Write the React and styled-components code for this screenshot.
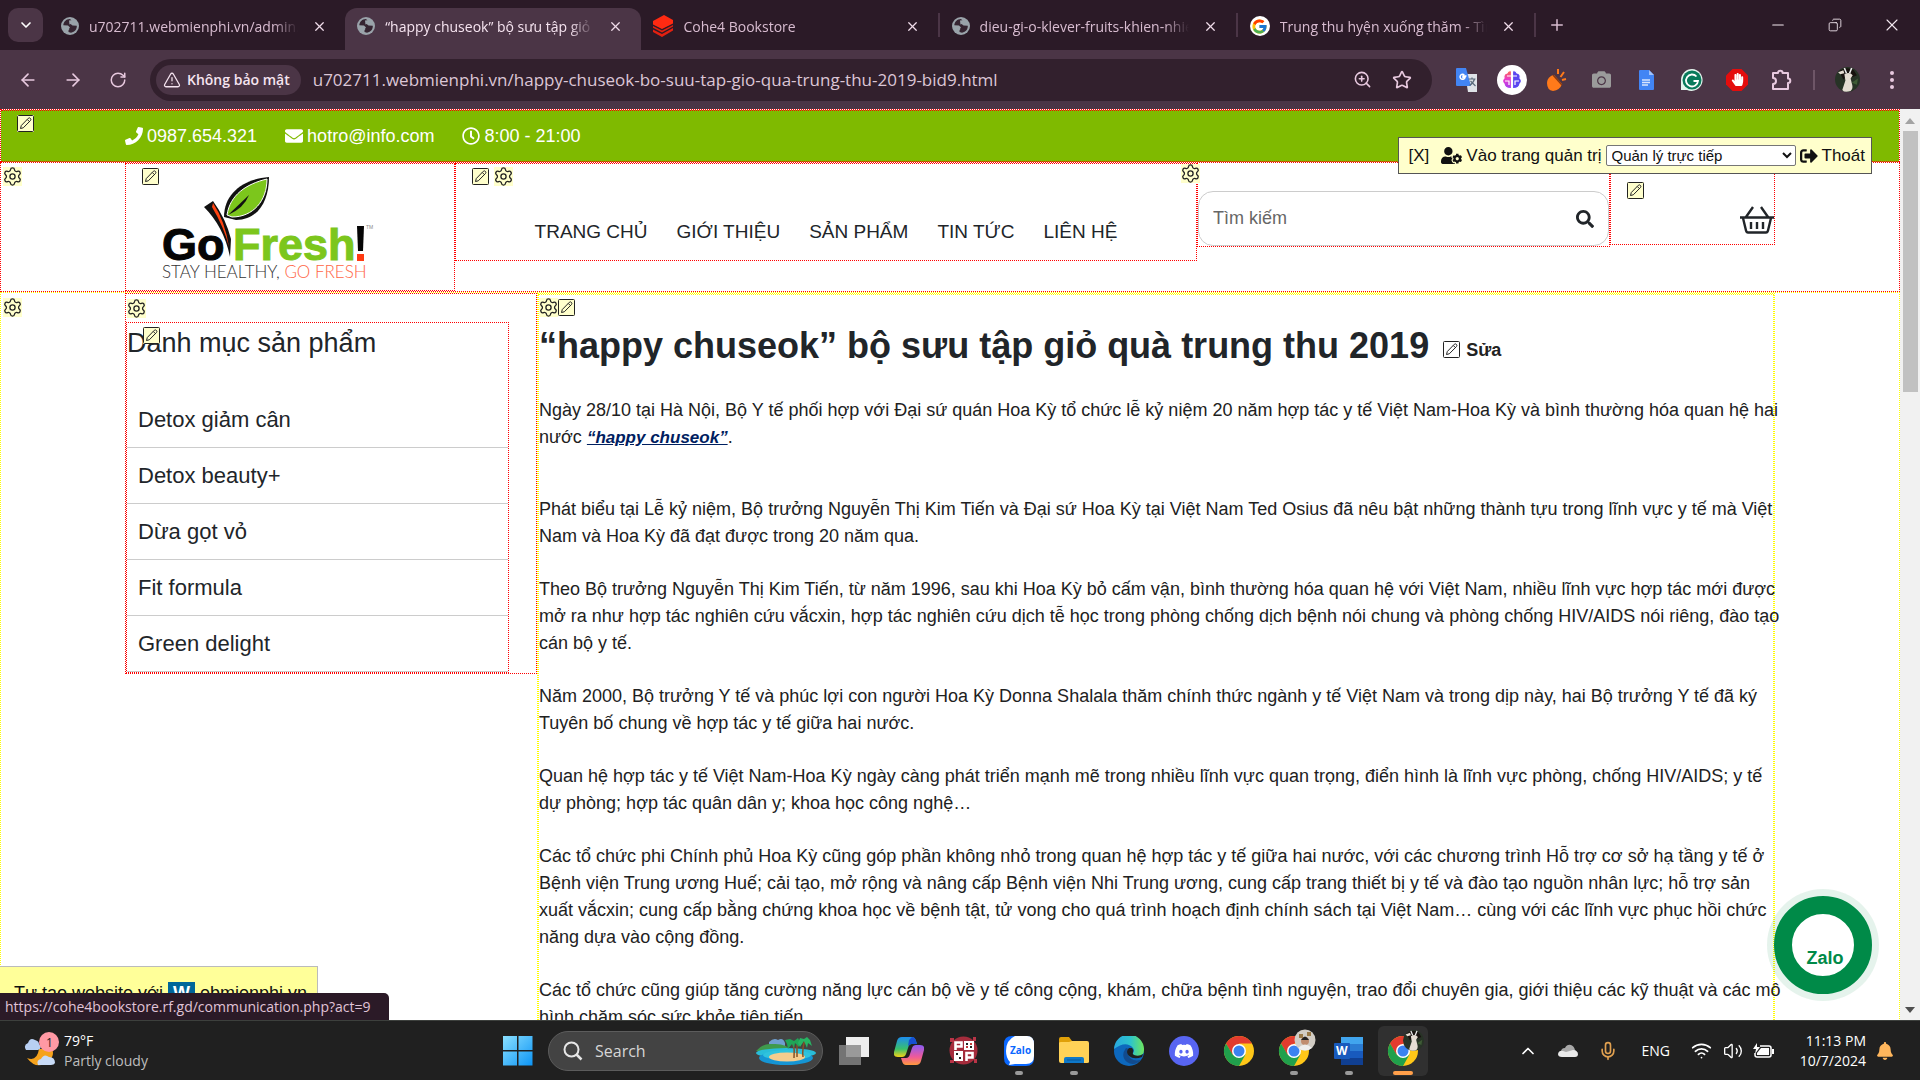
import React from "react";
import styled, { createGlobalStyle } from "styled-components";
import { Settings, Star, ZoomIn, RotateCw, ArrowLeft, ArrowRight, X, Plus, ChevronDown, ChevronUp, Wifi, Volume2, Mic, Minus, Copy, TriangleAlert } from "lucide-react";
import { FaPhone, FaEnvelope, FaRegClock, FaUserCog, FaSignOutAlt, FaSearch, FaDiscord, FaCamera, FaHandPaper, FaBell } from "react-icons/fa";
import { FcGoogle } from "react-icons/fc";

const ui = `"Open Sans", "Noto Sans", sans-serif`;
const arial = `"Liberation Sans", Arial, sans-serif`;

const GlobalStyle = createGlobalStyle`
  * { box-sizing: border-box; }
  body { margin: 0; font-family: ${arial}; color: #212529; }
  button, input, select { font: inherit; color: inherit; }
  button { border: 0; padding: 0; background: none; display: inline-flex; align-items: center; justify-content: center; }
  a { color: inherit; text-decoration: none; }
  h1, h2, p, ul { margin: 0; padding: 0; }
  ul { list-style: none; }
  svg { display: block; flex: none; }
`;

const Screen = styled.div`
  height: 100vh;
  display: flex;
  flex-direction: column;
  overflow: hidden;
  background: #fff;
`;

/* Browser chrome */
const TabStrip = styled.div`
  height: 50px;
  flex: none;
  display: flex;
  align-items: stretch;
  padding: 8px 0 0 8px;
  background: #2b1a27;
  color: #d8bcd0;
  font: 14px ${ui};
`;
const TabSearch = styled.button`
  width: 35px;
  height: 34px;
  border-radius: 10px;
  background: #4b3546;
  color: #fff;
`;
const Tabs = styled.div`
  display: flex;
  flex: 0 1 1487px;
  margin-left: 6px;
`;
const Tab = styled.div`
  flex: 1;
  min-width: 0;
  display: flex;
  align-items: center;
  gap: 10px;
  padding: 0 18px 6px 12px;
  color: ${(p) => (p.$active ? "#f6e4f0" : "inherit")};
  background: ${(p) => (p.$active ? "#4b3546" : "none")};
  border-radius: 12px 12px 0 0;
`;
const TabTitle = styled.span`
  flex: 1;
  overflow: hidden;
  white-space: nowrap;
  mask-image: linear-gradient(90deg, #000 88%, transparent);
`;
const TabClose = styled.button`
  margin-left: 4px;
  color: #f0dcea;
`;
const TabDivider = styled.span`
  width: 2px;
  height: 24px;
  margin-top: 5px;
  background: #4b3546;
`;
const ToolDivider = styled.span`
  width: 2px;
  height: 20px;
  margin: 0 9px;
  background: #6e5667;
`;
const NewTab = styled.button`
  width: 42px;
  height: 34px;
`;
const WindowButtons = styled.div`
  margin-left: auto;
  display: flex;
  height: 34px;
  color: #f3e8f0;
`;
const WindowButton = styled.button`
  width: 57px;
`;
const Toolbar = styled.div`
  height: 59px;
  flex: none;
  display: flex;
  align-items: center;
  padding: 0 6px 0 5px;
  background: #4b3546;
  color: #e8c9df;
  font: 16px ${ui};
`;
const ToolButton = styled.button`
  width: ${(p) => p.$w || 45}px;
  height: 40px;
`;
const Address = styled.div`
  flex: 1;
  min-width: 0;
  height: 42px;
  margin: 0 12px 0 10px;
  padding: 0 10px 0 6px;
  display: flex;
  align-items: center;
  border-radius: 21px;
  background: #32202d;
`;
const Security = styled.button`
  height: 30px;
  padding: 0 11px 0 7px;
  gap: 6px;
  border-radius: 15px;
  background: #4b3546;
  color: #f6e4f0;
  font: 600 14px ${ui};
`;
const Url = styled.input`
  flex: 1;
  min-width: 0;
  border: 0;
  outline: 0;
  background: none;
  color: #dcc6d6;
  font: 17px ${ui};
  padding: 0 0 0 12px;
`;
const BrainCircle = styled.span`
  width: 30px;
  height: 30px;
  border-radius: 50%;
  background: #fff;
  display: grid;
  place-items: center;
`;

/* Web page */
const Viewport = styled.div`
  flex: 1;
  min-height: 0;
  position: relative;
  display: flex;
  overflow: hidden;
`;
const Page = styled.div`
  flex: 1;
  min-width: 0;
`;
const Scrollbar = styled.div`
  width: 20px;
  display: flex;
  flex-direction: column;
  align-items: center;
  justify-content: space-between;
  background: #f1f1f1;
  padding: 9px 0 7px;
`;
const Thumb = styled.div`
  width: 15px;
  height: 261px;
  margin: 7px 0 auto;
  background: #c1c1c1;
`;
const TopBar = styled.div`
  position: relative;
  height: 53px;
  border: 1px dotted red;
  border-bottom: 0;
  background: #7fba00;
  background-clip: padding-box;
  color: #fff;
`;
const TopBarInner = styled.div`
  height: 52px;
  display: flex;
  align-items: center;
  gap: 28px;
  padding: 0 124px;
  border-top: 1px dotted red;
  border-bottom: 1px dotted red;
  font-size: 18px;
`;
const Contact = styled.a`
  display: flex;
  align-items: center;
  gap: 4px;
`;
const Header = styled.header`
  position: relative;
  border: 1px dotted red;
  height: 130px;
  display: grid;
  grid-template-columns: minmax(0, 330fr) minmax(0, 742fr) minmax(0, 413fr) minmax(0, 165fr);
  padding: 0 124px;
  align-items: start;
`;
const Cell = styled.div`
  position: relative;
  border: 1px dotted red;
  height: ${(p) => p.$h}px;
`;
const LogoCell = styled(Cell)`
  padding: 9px 0 0 36px;
`;
const Nav = styled.nav`
  position: relative;
  height: 98px;
  border: 1px dotted red;
  display: flex;
  justify-content: center;
  gap: 29px;
  padding: 56px 0 0;
  font-size: 19px;
  line-height: 24px;
  white-space: nowrap;
`;
const SearchCell = styled(Cell)`
  border-top: 0;
  padding-top: 28px;
`;
const SearchBox = styled.form`
  height: 55px;
  display: flex;
  align-items: center;
  padding: 0 14px;
  border: 1px solid #ccc;
  border-radius: 15px;
`;
const SearchInput = styled.input`
  flex: 1;
  min-width: 0;
  border: 0;
  outline: 0;
  padding: 0;
  font-size: 18px;
  &::placeholder { color: #666; opacity: 1; }
`;
const CartCell = styled(Cell)`
  display: flex;
  justify-content: flex-end;
  align-items: flex-end;
  padding: 0 0 10px;
`;
const Main = styled.main`
  position: relative;
  border: 1px dotted #ff0;
  display: grid;
  grid-template-columns: minmax(0, 412fr) minmax(0, 1238fr);
  align-items: start;
  padding: 0 124px;
`;
const Sidebar = styled.aside`
  position: relative;
  border: 1px dotted red;
  padding: 28px 27px 0 0;
`;
const Menu = styled.div`
  position: relative;
  border: 1px dotted red;
`;
const MenuTitle = styled.h2`
  font-size: 27px;
  font-weight: 400;
  line-height: 41px;
  margin-bottom: 28px;
`;
const MenuLink = styled.a`
  display: block;
  height: 56px;
  padding-left: 11px;
  border-bottom: 1px solid #ccc;
  font-size: 22px;
  line-height: 55px;
`;
const Article = styled.article`
  position: relative;
  border: 1px dotted #ff0;
  border-bottom: 0;
`;
const ArticleBody = styled.div`
  border: 1px dotted #ff0;
  border-bottom: 0;
  padding: 29px 0 0;
  height: 760px;
`;
const Title = styled.h1`
  display: flex;
  align-items: baseline;
  gap: 14px;
  font-size: 36px;
  line-height: 44px;
  margin-bottom: 29px;
`;
const EditLink = styled.a`
  display: inline-flex;
  align-items: center;
  gap: 6px;
  font-size: 18px;
  line-height: 20px;
  color: #222;
`;
const Text = styled.p`
  font-size: 18px;
  line-height: 27px;
  margin-bottom: ${(p) => (p.$wide ? 45 : 26)}px;
  color: #212121;
  white-space: nowrap;
`;
const Keyword = styled.a`
  color: #002060;
  font-weight: 700;
  font-style: italic;
  font-size: 17px;
  text-decoration: underline;
`;
const BadgeGroup = styled.span`
  position: absolute;
  z-index: 2;
  left: ${(p) => p.$x}px;
  top: ${(p) => p.$y}px;
  display: flex;
  align-items: center;
  gap: ${(p) => p.$gap || 0}px;
`;
const Badge = styled.button`
  background: #ffffcc;
  color: #222;
`;
const AdminPanel = styled.div`
  position: absolute;
  z-index: 3;
  right: 48px;
  top: 28px;
  height: 37px;
  display: flex;
  align-items: center;
  gap: 4px;
  padding: 0 6px 0 10px;
  border: 1px solid #555;
  background: #ffffcc;
  color: #111;
  font-size: 17px;
  white-space: nowrap;
`;
const AdminLink = styled.a`
  display: flex;
  align-items: center;
  gap: 4px;
`;
const ClosePanel = styled.button`
  margin-right: 8px;
`;
const ModeSelect = styled.select`
  width: 190px;
  height: 21px;
  padding: 0 1px;
  border: 1px solid #767676;
  border-radius: 2px;
  background: #fff;
  font-size: 15px;
`;
const ZaloButton = styled.button`
  position: absolute;
  z-index: 3;
  right: 41px;
  bottom: 19px;
  width: 112px;
  height: 112px;
  border-radius: 50%;
  background: rgba(0, 138, 72, 0.1);
`;
const ZaloRing = styled.span`
  width: 98px;
  height: 98px;
  border: 18px solid #008a48;
  border-radius: 50%;
  background: #fff;
  color: #008a48;
  font: 700 18px/20px ${arial};
  padding: 34px 0 0 4px;
`;
const Promo = styled.a`
  position: absolute;
  left: 0;
  bottom: 0;
  width: 318px;
  height: 54px;
  padding: 15px 14px;
  border: 1px solid #bbb;
  border-left: 0;
  background: #ffff99;
  color: #111;
  font-size: 18px;
  line-height: 22px;
  white-space: nowrap;
`;
const PromoMark = styled.b`
  display: inline-block;
  padding: 0 5px;
  background: #006699;
  color: #fff;
`;
const StatusBubble = styled.div`
  position: absolute;
  z-index: 2;
  left: 0;
  bottom: 0;
  height: 27px;
  padding: 0 18px 0 5px;
  border-radius: 0 5px 0 0;
  background: #2b1a27;
  color: #e0c4d8;
  font: 14px/27px ${ui};
`;

/* Taskbar */
const Taskbar = styled.footer`
  height: 60px;
  flex: none;
  display: grid;
  grid-template-columns: 1fr auto 1fr;
  align-items: center;
  border-top: 1px solid #3d403d;
  background: #202020;
  color: #fff;
  font: 14px ${ui};
`;
const Weather = styled.div`
  display: flex;
  gap: 4px;
  padding-left: 24px;
  line-height: 20px;
`;
const Muted = styled.div`
  color: #bdbdbd;
`;
const Apps = styled.div`
  display: flex;
  align-items: center;
`;
const TaskSearch = styled.label`
  width: 275px;
  height: 40px;
  margin: 0 3px;
  display: flex;
  align-items: center;
  gap: 12px;
  padding: 0 5px 0 14px;
  border: 1px solid #5c5c5c;
  border-radius: 20px;
  background: #434343;
`;
const TaskInput = styled.input`
  flex: 1;
  min-width: 0;
  border: 0;
  outline: 0;
  padding: 0;
  background: none;
  font-size: 16px;
  &::placeholder { color: #d6d6d6; opacity: 1; }
`;
const AppButton = styled.button`
  width: ${(p) => (p.$active ? 50 : 45)}px;
  height: 50px;
  margin: 0 ${(p) => (p.$active ? 2 : 5)}px;
  border-radius: 6px;
  position: relative;
  background: ${(p) => (p.$active ? "#303030" : "none")};
  &::after {
    content: "";
    position: absolute;
    bottom: 1px;
    width: ${(p) => (p.$active ? 20 : 8)}px;
    height: 4px;
    border-radius: 2px;
    background: ${(p) => (p.$active ? "#ff9f4a" : p.$open ? "#9a9a9a" : "none")};
  }
`;
const Tray = styled.div`
  display: flex;
  align-items: center;
  justify-content: flex-end;
  padding-right: 26px;
`;
const TrayItem = styled.span`
  width: ${(p) => p.$w}px;
  display: flex;
  justify-content: center;
`;
const Clock = styled.div`
  margin: 0 10px 0 18px;
  text-align: right;
  line-height: 20px;
`;

/* Drawings */
const Globe = () => (
  <svg width="18" height="18" viewBox="0 0 18 18">
    <circle cx="9" cy="9" r="9" fill="#9aa3aa" />
    <path d="M9 2c-4 0-6.500 3-6.700 6.300L7 8.500 9 10.500 7.500 12v3L10 15.800c4-.8 6-3.800 5.800-7L11.500 8.500 8.500 6l3-1.500z" fill="#352431" />
    <path d="M8 3.500 12 3l3 4-4-.5-2.500 1zM4 10l3.500.5L8.500 12l-2 2z" fill="#9aa3aa" />
  </svg>
);
const Books = () => (
  <svg width="20" height="22" viewBox="0 0 20 22">
    <path d="M0 6 11 0l9 5v3.500L9 14 0 9.500z" fill="#ff2a12" />
    <path d="M0 11 9 15.500 20 10v1.500L9 17.500 0 12.800zM0 14.500 9 19l11-6v2.500L9 22 0 17z" fill="#e32010" />
  </svg>
);
const GoogleBadge = styled.span`
  width: 20px;
  height: 20px;
  border-radius: 50%;
  background: #fff;
  display: grid;
  place-items: center;
`;
const Pencil = () => (
  <svg width="17" height="17" viewBox="0 0 17 17" fill="none" stroke="#222">
    <rect x=".5" y=".5" width="16" height="16" rx="1" />
    <path d="M3.500 13.500 4.300 10.500 11.300 3.300Q12.500 2.300 13.500 3.500 14.300 4.600 13.500 5.500L6.300 12.800ZM10.300 4.500 12.300 6.500" />
  </svg>
);
const Gear = () => <Settings size={19} viewBox="1 1 22 22" strokeWidth={1.5} />;
const Edit = ({ x, y, kinds, gap }) => (
  <BadgeGroup $x={x} $y={y} $gap={gap}>
    {kinds.map((k) => (
      <Badge key={k} type="button" aria-label={k === "edit" ? "Sửa" : "Cài đặt"}>
        {k === "edit" ? <Pencil /> : <Gear />}
      </Badge>
    ))}
  </BadgeGroup>
);
const Logo = () => (
  <svg width="212" height="112" viewBox="162 174 212 112" role="img" aria-label="Go Fresh">
    <path d="M224 218C224 194 244 180 269 178 269 202 258 221 236 221Z" fill="#111" />
    <path d="M227 216C230 196 246 185 267 180 267 202 253 218 232 218Z" fill="#7cc61c" stroke="#fff" strokeWidth="1" />
    <path d="M228 216 249 196Q244 209 228 216" fill="#111" />
    <path d="M204 208 213 202Q226 220 231 240L230 258Q224 228 204 208" fill="#111" />
    <path d="M213 204Q225 222 229 248 224 228 212 208Z" fill="#ff4310" />
    <g fontFamily="Liberation Sans" fontWeight="700" fontSize="45">
      <text x="162" y="261" fill="#050505" stroke="#050505">Go</text>
      <text x="233" y="261" fill="#7cc61c" stroke="#7cc61c">Fresh</text>
    </g>
    <path d="M357 227h7l-1 25h-5z" fill="#050505" />
    <path d="M357 255h7v7h-7z" fill="#ff3b12" />
    <text x="366" y="230" fontFamily="Liberation Sans" fontSize="5" fill="#888">TM</text>
    <text x="162" y="279" fontFamily="Lato" fontSize="17" fontWeight="300" fill="#333">
      STAY HEALTHY, <tspan fill="#ff6545">GO FRESH</tspan>
    </text>
  </svg>
);
const Basket = () => (
  <svg width="34" height="28" viewBox="0 0 34 28" fill="none" stroke="#212529" strokeWidth="2.400">
    <path d="M0 11.500h34M3 12l3 12.500q.5 2 2 2h18q1.500 0 2-2l3-12.500M6 11l7-10M28 11 21 1M11 16v7M17 16v7M23 16v7" />
  </svg>
);
const Triangle = ({ up }) => (
  <svg width="10" height="6"><path d={up ? "M5 0 10 6H0z" : "M0 0h10L5 6z"} fill={up ? "#a3a3a3" : "#505050"} /></svg>
);
const Translate = () => (
  <svg width="22" height="24" viewBox="0 0 22 24">
    <path d="M9 6h12v18H12z" fill="#dfe3e8" />
    <path d="M0 1q0-1 1-1h9l5 18H1q-1 0-1-1z" fill="#4285f4" />
    <path d="M10.500 8H7v1.500h2a2.500 2.500 0 1 1-.7-2.500" stroke="#fff" strokeWidth="1.500" fill="none" />
    <path d="M12.500 11h7M16 9.500V11M18.500 11q-1 4-5 6.500M14.500 13l5 5" stroke="#5b6b7b" strokeWidth="1.200" fill="none" />
  </svg>
);
const Brain = () => (
  <svg width="20" height="20" viewBox="0 0 20 20" fill="none" strokeWidth="1.200" stroke="#fff">
    <defs><linearGradient id="brn" x2="0" y2="1"><stop stopColor="#ff6a4a" /><stop offset=".5" stopColor="#e83ad0" /><stop offset="1" stopColor="#a040f0" /></linearGradient></defs>
    <path d="M9.500 1Q6 0 5 3 1 4 2 8-1 11 2 14 3 19 9.500 18.500Z" fill="url(#brn)" />
    <path d="M10.500 1Q14 0 15 3 19 4 18 8q3 3 0 6-1 5-7.500 4.500Z" fill="#5a46f0" />
    <path d="M5 6h4M3 11h4v4M15 6h-4M17 11h-4v4" />
  </svg>
);
const Carrot = () => (
  <svg width="20" height="24" viewBox="0 0 20 24">
    <path d="M1 11q3-4 6-4l8 9q-2 6-9 7-6-1-6-8 0-2 1-4" fill="#ff7a1a" />
    <path d="m6 7 9 10" stroke="#8a3a12" strokeWidth="1.500" />
    <path d="M11 6V1M13.500 9 17 4M15 12l4-1" stroke="#ff7a1a" strokeWidth="2" />
  </svg>
);
const Docs = () => (
  <svg width="15" height="20" viewBox="0 0 15 20">
    <path d="M0 1q0-1 1-1h9l5 5v14q0 1-1 1H1q-1 0-1-1z" fill="#4285f4" />
    <path d="M10 0v5h5z" fill="#a1c2fa" />
    <path d="M3 10h8M3 12.500h8M3 15h6" stroke="#d8e5fd" strokeWidth="1.300" />
  </svg>
);
const Grammar = () => (
  <svg width="22" height="22" viewBox="0 0 22 22">
    <path d="M11 0a11 11 0 1 1-5 21H0V11A11 11 0 0 1 11 0" fill="#e4f5ee" />
    <circle cx="11" cy="11" r="9.500" fill="#087a5b" />
    <path d="M15.500 7.500A6 6 0 1 0 17 12h-4.500" fill="none" stroke="#fff" strokeWidth="1.800" />
  </svg>
);
const AdBlock = () => (
  <svg width="22" height="22" viewBox="0 0 22 22">
    <path d="M6.500 0h9L22 6.500v9L15.500 22h-9L0 15.500v-9z" fill="#e40d0d" />
    <g transform="translate(5 4)"><FaHandPaper size={13} color="#fff" /></g>
  </svg>
);
const PuzzlePiece = () => (
  <svg width="22" height="22" viewBox="0 0 22 22" fill="none" stroke="currentColor" strokeWidth="2" strokeLinejoin="round">
    <path d="M2 4h5a2.300 2.300 0 0 1 4.600 0H17v5.500a2.300 2.300 0 0 1 0 4.600V20H2v-5a3 3 0 0 0 0-6z" />
  </svg>
);
const Goat = ({ size }) => (
  <svg width={size} height={size} viewBox="0 0 24 24">
    <circle cx="12" cy="12" r="12" fill="#273326" />
    <path d="M4 4q7-5 14-1l3 5-5 2-4-2-4 4z" fill="#18120f" />
    <path d="M3 5 8 3 9 6 5 7z" fill="#e5ddd3" />
    <path d="M9 7q5-3 8 1l-2 3 1 4q2 6-1 8-6 2-8-1l3-9z" fill="#e5ddd3" />
    <path d="M14 6 16 1M11 6 9 1" stroke="#eee" strokeWidth="1.500" />
    <path d="m16 15 6-4-1 6z" fill="#3e5b35" />
  </svg>
);
const WeatherIcon = () => (
  <svg width="36" height="36" viewBox="24 1026 36 36">
    <path d="M27 1053q10 4 12-9l13 0q3 6-3 12-12 10-22-3" fill="#f6a21c" />
    <path d="M26 1045q-3-5 2-7 2-6 7-3 4 1 4 4 4 4-1 6z" fill="#b8cff2" />
    <path d="M38 1060q-2-5 3-6 3-6 8-2 6 0 6 6-1 2-4 2z" fill="#c8dbf7" />
    <circle cx="49" cy="1037" r="10" fill="#ff99a4" />
    <text x="46" y="1042" fontFamily="Open Sans" fontSize="12" fill="#222">1</text>
  </svg>
);
const WindowsLogo = () => (
  <svg width="30" height="30" viewBox="0 0 30 30">
    <defs><linearGradient id="win" x2="1" y2="1"><stop stopColor="#8be0ff" /><stop offset="1" stopColor="#0c94f5" /></linearGradient></defs>
    <path d="M0 0h14v14H0zM15.500 0h14v14h-14zM0 15.500h14v14H0zM15.500 15.500h14v14h-14z" fill="url(#win)" />
  </svg>
);
const Island = () => (
  <svg width="62" height="30" viewBox="0 0 62 30">
    <path d="M14 6q5-5 9-2 5-3 7 3v5H14z" fill="#6f9fd0" />
    <path d="M1 15Q8 7 17 8q15-1 19 7z" fill="#3f9a4c" />
    <ellipse cx="31" cy="17" rx="30" ry="5" fill="#29bdd9" />
    <ellipse cx="31" cy="22" rx="27" ry="7" fill="#1595d4" />
    <ellipse cx="32" cy="19" rx="24" ry="5" fill="#2fc3de" />
    <ellipse cx="32" cy="21" rx="18" ry="4.500" fill="#f5cd8e" />
    <path d="M38 7q2 7 1 15M50 4q-3 8-2 17M42 9v12" stroke="#875126" strokeWidth="1.500" fill="none" />
    <path d="m37 8-4 5-1-5-2-4 5-1 4 2 4-3 2 4-1 5-4-4-1 5z" fill="#20a557" />
    <path d="m49 5-4 6-2-4 2-5 4 1 3-2 3 3 2 6-4-3-1 5z" fill="#27b463" />
  </svg>
);
const TaskView = () => (
  <svg width="30" height="28" viewBox="0 0 30 28"><path d="M7 0h23v20H7z" fill="#eee" /><path d="M0 8h22v20H0z" fill="#888" fillOpacity=".82" /></svg>
);
const Copilot = () => (
  <svg width="30" height="28" viewBox="0 0 30 28">
    <defs>
      <linearGradient id="cpa" x2="0" y2="1"><stop stopColor="#1d8df0" /><stop offset=".6" stopColor="#39c06a" /><stop offset="1" stopColor="#f5d216" /></linearGradient>
      <linearGradient id="cpb" x2="0" y2="1"><stop stopColor="#8a5cf5" /><stop offset=".6" stopColor="#f05a9a" /><stop offset="1" stopColor="#ff9a3c" /></linearGradient>
    </defs>
    <path d="M8 0h10q3 0 4 4l1 3h-5q-3 0-4 4l-2 6q-1 3-4 3H4q-5 0-4-5L3 4q1-4 5-4" fill="url(#cpa)" />
    <path d="M18 0q3 0 4 4l1 3h-6l-3 2 1-6z" fill="#164fd2" />
    <path d="M22 28H12q-3 0-4-4l-1-3h5q3 0 4-4l2-6q1-3 4-3h4q5 0 4 5l-3 11q-1 4-5 4" fill="url(#cpb)" />
  </svg>
);
const Dice = () => (
  <svg width="29" height="29" viewBox="0 0 29 29">
    <circle cx="14.500" cy="14.500" r="14" fill="#a52c3c" />
    <path d="M1 2h4v4H1zM24 1h3v4h-3zM1 24h4v3H1zM25 23h3v4h-3z" fill="#b93447" />
    <path d="M15 5h10v9H15zM5 15h9v10H5z" fill="#fff" />
    <path d="M6.500 14V6.500h6v4h-6M17.500 25v-8h6v4.500h-6" fill="none" stroke="#fff" strokeWidth="2.600" />
    <path d="M17 7h2v2h-2zM21 10h2v2h-2zM7 17h2v2H7zM10 21h2v2h-2z" fill="#222" />
    <path d="M21 7h2v2h-2zM17 10h2v2h-2z" fill="#c03a3a" />
  </svg>
);
const ZaloApp = () => (
  <svg width="30" height="30" viewBox="0 0 30 30">
    <path d="M8 0h14q8 0 8 8v14q0 8-8 8H8q-8 0-8-8V8q0-8 8-8" fill="#0a68ff" />
    <path d="M11 0h12q7 0 7 8v12q0 8-8 8H11l-6 1 1-3Q2 22 2 15 2 4 11 0" fill="#fff" />
    <text x="6" y="18" fontFamily="Open Sans" fontWeight="700" fontSize="10" fill="#0a68ff">Zalo</text>
  </svg>
);
const Folder = () => (
  <svg width="30" height="27" viewBox="0 0 30 27">
    <path d="M0 2q0-2 2-2h8l3 4h15v5H0z" fill="#e0a008" />
    <path d="M0 6q0-1 2-1h8l3-1h15q2 0 2 2v19q0 1-2 1H2q-2 0-2-2z" fill="#ffd257" />
    <path d="M5 26v-4q0-2 2-2h16q2 0 2 2v4z" fill="#0e78c9" /><path d="M8 23h14" stroke="#085797" />
  </svg>
);
const Edge = () => (
  <svg width="30" height="30" viewBox="0 0 30 30">
    <defs><linearGradient id="edg" x2="1"><stop stopColor="#28a8e0" /><stop offset=".55" stopColor="#2dc4cc" /><stop offset="1" stopColor="#6ee65c" /></linearGradient></defs>
    <circle cx="15" cy="15" r="15" fill="#0d68bd" />
    <path d="M0 13A15 15 0 0 1 30 14q0 6-7 6-5 0-4-3 2-2 0-5-7-8-19 1" fill="url(#edg)" />
    <path d="M12 12Q6 20 13 26q7 5 14-2-10 2-13-5-1-3 1-6z" fill="#124b8d" />
    <path d="M15 12q-4 4 0 8 5 4 13 1l1-3q-4 3-9 1-2-1-1-3 1-2-1-4z" fill="#202020" />
  </svg>
);
const DiscordApp = () => (
  <svg width="30" height="30" viewBox="0 0 30 30"><circle cx="15" cy="15" r="15" fill="#5865f2" /><g transform="translate(5 5)"><FaDiscord size={20} color="#fff" /></g></svg>
);
const Chrome = ({ avatar }) => (
  <svg width="30" height="30" viewBox="0 0 30 30" overflow="visible">
    <circle cx="15" cy="15" r="15" fill="#ffc718" />
    <path d="M2 7.500A15 15 0 0 1 28 7.500H15L8.500 19z" fill="#e33b2e" />
    <path d="M2 7.500A15 15 0 0 0 15 30l6.500-11.500h-13z" fill="#20a04c" />
    <circle cx="15" cy="15" r="7" fill="#fff" /><circle cx="15" cy="15" r="5.500" fill="#3b82f0" />
    {avatar === "goat" && <g transform="translate(15 -6)"><Goat size={21} /></g>}
    {avatar === "man" && (
      <g><circle cx="26" cy="4" r="10.500" fill="#d2cdc5" /><path d="M20-2h4v4h-4zM28-4h4v4h-4z" fill="#9a7a48" /><circle cx="26" cy="5" r="4" fill="#c08d70" /><path d="M22 4q4-7 8 0z" fill="#222" /><path d="M19 12q7-7 14 0-7 5-14 0" fill="#eee" /></g>
    )}
  </svg>
);
const Word = () => (
  <svg width="30" height="28" viewBox="0 0 30 28">
    <path d="M7 0h22v7H7z" fill="#41a5ee" /><path d="M7 7h22v7H7z" fill="#2b7cd3" /><path d="M7 14h22v7H7z" fill="#185abd" /><path d="M7 21h22v7H7z" fill="#103f91" />
    <rect y="6" width="16" height="16" rx="1" fill="#185abd" />
    <text x="2" y="18" fontFamily="Open Sans" fontWeight="700" fontSize="12" fill="#fff">W</text>
  </svg>
);
const Cloud = () => (
  <svg width="20" height="14" viewBox="0 0 20 14"><path d="M3 8q0-4 4-4 2-4 6-3 3 1 4 5l3 3-8 4z" fill="#a8a8a8" /><path d="M4 13q-4 0-4-3 1-4 5-3l3 1 7-2q4 0 5 4 0 3-3 3z" fill="#e9e9e9" /></svg>
);
const Battery = () => (
  <svg width="22" height="16" viewBox="0 0 22 16"><path d="M7 3h9q2 0 2 2v7q0 2-2 2H4q-2 0-2-2v-2" fill="none" stroke="#fff" strokeWidth="1.500" /><path d="M8 5h8v7H4v-2z" fill="#fff" /><path d="M20 6v5" stroke="#fff" strokeWidth="2" /><path d="M4 0 0 6h3l-1 5 5-7H4z" fill="#fff" /></svg>
);

const tabs = [
  { title: "u702711.webmienphi.vn/admin.php", icon: <Globe /> },
  { title: "“happy chuseok” bộ sưu tập giỏ quà", icon: <Globe />, active: true },
  { title: "Cohe4 Bookstore", icon: <Books />, line: true },
  { title: "dieu-gi-o-klever-fruits-khien-nhieu", icon: <Globe />, line: true },
  { title: "Trung thu hyện xuống thăm - Tìm", icon: <GoogleBadge><FcGoogle size={17} /></GoogleBadge>, line: true },
];
const extensions = [
  ["Dịch", <Translate />],
  ["Brain", <BrainCircle><Brain /></BrainCircle>],
  ["Carrot", <Carrot />],
  ["Camera", <FaCamera size={19} color="#9b9b9b" />],
  ["Docs", <Docs />],
  ["Grammar", <Grammar />],
  ["AdBlock", <AdBlock />],
  ["Extensions", <PuzzlePiece />],
];
const nav = ["TRANG CHỦ", "GIỚI THIỆU", "SẢN PHẨM", "TIN TỨC", "LIÊN HỆ"];
const categories = ["Detox giảm cân", "Detox beauty+", "Dừa gọt vỏ", "Fit formula", "Green delight"];
const paragraphs = [
  ["Phát biểu tại Lễ kỷ niệm, Bộ trưởng Nguyễn Thị Kim Tiến và Đại sứ Hoa Kỳ tại Việt Nam Ted Osius đã nêu bật những thành tựu trong lĩnh vực y tế mà Việt", "Nam và Hoa Kỳ đã đạt được trong 20 năm qua."],
  ["Theo Bộ trưởng Nguyễn Thị Kim Tiến, từ năm 1996, sau khi Hoa Kỳ bỏ cấm vận, bình thường hóa quan hệ với Việt Nam, nhiều lĩnh vực hợp tác mới được", "mở ra như hợp tác nghiên cứu vắcxin, hợp tác nghiên cứu dịch tễ học trong phòng chống dịch bệnh nói chung và phòng chống HIV/AIDS nói riêng, đào tạo", "cán bộ y tế."],
  ["Năm 2000, Bộ trưởng Y tế và phúc lợi con người Hoa Kỳ Donna Shalala thăm chính thức ngành y tế Việt Nam và trong dịp này, hai Bộ trưởng Y tế đã ký", "Tuyên bố chung về hợp tác y tế giữa hai nước."],
  ["Quan hệ hợp tác y tế Việt Nam-Hoa Kỳ ngày càng phát triển mạnh mẽ trong nhiều lĩnh vực quan trọng, điển hình là lĩnh vực phòng, chống HIV/AIDS; y tế", "dự phòng; hợp tác quân dân y; khoa học công nghệ…"],
  ["Các tổ chức phi Chính phủ Hoa Kỳ cũng góp phần không nhỏ trong quan hệ hợp tác y tế giữa hai nước, với các chương trình Hỗ trợ cơ sở hạ tầng y tế ở", "Bệnh viện Trung ương Huế; cải tạo, mở rộng và nâng cấp Bệnh viện Nhi Trung ương, cung cấp trang thiết bị y tế và đào tạo nguồn nhân lực; hỗ trợ sản", "xuất vắcxin; cung cấp bằng chứng khoa học về bệnh tật, tử vong cho quá trình hoạch định chính sách tại Việt Nam… cùng với các lĩnh vực phục hồi chức", "năng dựa vào cộng đồng."],
  ["Các tổ chức cũng giúp tăng cường năng lực cán bộ về y tế công cộng, khám, chữa bệnh tình nguyện, trao đổi chuyên gia, giới thiệu các kỹ thuật và các mô", "hình chăm sóc sức khỏe tiên tiến."],
];
const apps = [
  ["Task view", <TaskView />],
  ["Copilot", <Copilot />],
  ["Dice", <Dice />],
  ["Zalo", <ZaloApp />, true],
  ["Explorer", <Folder />, true],
  ["Edge", <Edge />],
  ["Discord", <DiscordApp />],
  ["Chrome", <Chrome />],
  ["Chrome 2", <Chrome avatar="man" />, true],
  ["Word", <Word />, true],
];

export default function App() {
  return (
    <Screen>
      <GlobalStyle />
      <TabStrip>
        <TabSearch aria-label="Tabs"><ChevronDown size={16} strokeWidth={2.5} /></TabSearch>
        <Tabs>
          {tabs.map((t) => (
            <React.Fragment key={t.title}>
              <Tab $active={t.active}>
                {t.icon}
                <TabTitle>{t.title}</TabTitle>
                <TabClose aria-label="Close tab"><X size={15} /></TabClose>
              </Tab>
              {t.line && <TabDivider />}
            </React.Fragment>
          ))}
        </Tabs>
        <NewTab aria-label="New tab"><Plus size={18} /></NewTab>
        <WindowButtons>
          <WindowButton aria-label="Minimize"><Minus size={18} strokeWidth={1.5} /></WindowButton>
          <WindowButton aria-label="Restore"><Copy size={14} strokeWidth={1.5} transform="scale(-1 1)" /></WindowButton>
          <WindowButton aria-label="Close"><X size={20} strokeWidth={1.3} /></WindowButton>
        </WindowButtons>
      </TabStrip>
      <Toolbar>
        <ToolButton aria-label="Back"><ArrowLeft size={20} /></ToolButton>
        <ToolButton aria-label="Forward"><ArrowRight size={20} /></ToolButton>
        <ToolButton aria-label="Reload"><RotateCw size={18} /></ToolButton>
        <Address>
          <Security><TriangleAlert size={18} strokeWidth={1.7} />Không bảo mật</Security>
          <Url aria-label="URL" defaultValue="u702711.webmienphi.vn/happy-chuseok-bo-suu-tap-gio-qua-trung-thu-2019-bid9.html" />
          <ToolButton $w={40} aria-label="Zoom"><ZoomIn size={19} /></ToolButton>
          <ToolButton $w={40} aria-label="Bookmark"><Star size={20} /></ToolButton>
        </Address>
        {extensions.map(([name, icon]) => <ToolButton key={name} aria-label={name}>{icon}</ToolButton>)}
        <ToolDivider />
        <ToolButton $w={46} aria-label="Profile"><Goat size={25} /></ToolButton>
        <ToolButton $w={44} aria-label="Menu"><svg width="4" height="20" fill="currentColor"><circle cx="2" cy="3" r="2" /><circle cx="2" cy="10" r="2" /><circle cx="2" cy="17" r="2" /></svg></ToolButton>
      </Toolbar>

      <Viewport>
        <Page>
          <TopBar>
            <Edit x={16} y={5} kinds={["edit"]} />
            <TopBarInner>
              <Contact href="#tel"><FaPhone size={18} />0987.654.321</Contact>
              <Contact href="#mail"><FaEnvelope size={18} />hotro@info.com</Contact>
              <Contact href="#time"><FaRegClock size={18} />8:00 - 21:00</Contact>
            </TopBarInner>
          </TopBar>
          <Header>
            <Edit x={2} y={4} kinds={["gear"]} />
            <LogoCell $h={128}>
              <Edit x={16} y={4} kinds={["edit"]} />
              <Logo />
            </LogoCell>
            <Nav>
              <Edit x={16} y={3} gap={5} kinds={["edit", "gear"]} />
              {nav.map((n) => <a key={n} href="#nav">{n}</a>)}
            </Nav>
            <SearchCell $h={84}>
              <Edit x={-17} y={1} kinds={["gear"]} />
              <SearchBox role="search">
                <SearchInput aria-label="Tìm kiếm" placeholder="Tìm kiếm" />
                <button type="button" aria-label="Tìm"><FaSearch size={18} /></button>
              </SearchBox>
            </SearchCell>
            <CartCell $h={82}>
              <Edit x={16} y={18} kinds={["edit"]} />
              <a href="#cart" aria-label="Giỏ hàng"><Basket /></a>
            </CartCell>
          </Header>
          <Main>
            <Edit x={2} y={5} kinds={["gear"]} />
            <Sidebar>
              <Edit x={1} y={5} kinds={["gear"]} />
              <Menu>
                <Edit x={16} y={4} kinds={["edit"]} />
                <MenuTitle>Danh mục sản phẩm</MenuTitle>
                <ul>{categories.map((c) => <li key={c}><MenuLink href="#cat">{c}</MenuLink></li>)}</ul>
              </Menu>
            </Sidebar>
            <Article>
              <Edit x={1} y={4} gap={-3} kinds={["gear", "edit"]} />
              <ArticleBody>
                <Title>
                  “happy chuseok” bộ sưu tập giỏ quà trung thu 2019
                  <EditLink href="#edit"><Pencil />Sửa</EditLink>
                </Title>
                <Text $wide>
                  Ngày 28/10 tại Hà Nội, Bộ Y tế phối hợp với Đại sứ quán Hoa Kỳ tổ chức lễ kỷ niệm 20 năm hợp tác y tế Việt Nam-Hoa Kỳ và bình thường hóa quan hệ hai<br />
                  nước <Keyword href="#k">“happy chuseok”</Keyword>.
                </Text>
                {paragraphs.map((lines) => (
                  <Text key={lines[0]}>
                    {lines.map((l) => <React.Fragment key={l}>{l}<br /></React.Fragment>)}
                  </Text>
                ))}
              </ArticleBody>
            </Article>
          </Main>
        </Page>
        <Scrollbar><Triangle up /><Thumb /><Triangle /></Scrollbar>
        <AdminPanel>
          <ClosePanel>[X]</ClosePanel>
          <AdminLink href="#admin"><FaUserCog size={21} />Vào trang quản trị</AdminLink>
          <ModeSelect aria-label="Chế độ" defaultValue="a"><option value="a">Quản lý trực tiếp</option></ModeSelect>
          <AdminLink href="#exit"><FaSignOutAlt size={18} />Thoát</AdminLink>
        </AdminPanel>
        <ZaloButton><ZaloRing>Zalo</ZaloRing></ZaloButton>
        <Promo href="#promo">Tự tạo website với <PromoMark>W</PromoMark> ebmienphi.vn</Promo>
        <StatusBubble>https://cohe4bookstore.rf.gd/communication.php?act=9</StatusBubble>
      </Viewport>

      <Taskbar>
        <Weather><WeatherIcon /><div><div>79°F</div><Muted>Partly cloudy</Muted></div></Weather>
        <Apps>
          <AppButton aria-label="Start"><WindowsLogo /></AppButton>
          <TaskSearch>
            <svg width="20" height="20" fill="none" stroke="#e6e6e6" strokeWidth="2"><circle cx="8.500" cy="8.500" r="7" /><path d="m13.500 13.500 5 5" strokeWidth="2.500" /></svg>
            <TaskInput placeholder="Search" aria-label="Search" />
            <Island />
          </TaskSearch>
          {apps.map(([name, icon, open]) => <AppButton key={name} aria-label={name} $open={open}>{icon}</AppButton>)}
          <AppButton $active aria-label="Chrome 3"><Chrome avatar="goat" /></AppButton>
        </Apps>
        <Tray>
          <TrayItem $w={40}><ChevronUp size={20} /></TrayItem>
          <TrayItem $w={40}><Cloud /></TrayItem>
          <TrayItem $w={40}><Mic size={20} color="#e0a050" /></TrayItem>
          <TrayItem $w={56}>ENG</TrayItem>
          <TrayItem $w={36}><Wifi size={21} /></TrayItem>
          <TrayItem $w={26}><Volume2 size={20} strokeWidth={1.6} /></TrayItem>
          <TrayItem $w={36}><Battery /></TrayItem>
          <Clock><div>11:13 PM</div><div>10/7/2024</div></Clock>
          <FaBell size={18} color="#ffb65c" />
        </Tray>
      </Taskbar>
    </Screen>
  );
}
